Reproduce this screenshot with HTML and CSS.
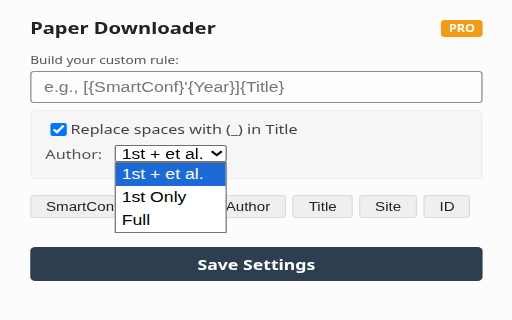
FILE: index.html
```html
<!DOCTYPE html>
<html lang="en">
<head>
  <meta charset="UTF-8" />
  <title>Paper Downloader</title>
  <meta name="viewport" content="width=device-width, initial-scale=1.0" />
  <link rel="stylesheet" href="styles.css">
</head>
<body>

<div class="popup">
  <div class="header">
    <h1>Paper Downloader</h1>
    <span class="badge">PRO</span>
  </div>

  <label class="rule-label" for="rule">Build your custom rule:</label>
  <input type="text" id="rule" class="rule-input" placeholder="e.g., [{SmartConf}'{Year}]{Title}" />

  <div class="options">
    <label class="opt-row">
      <input type="checkbox" checked />
      <span>Replace spaces with (_) in Title</span>
    </label>
    <div class="opt-row">
      <span class="author-label">Author:</span>
      <div class="select-wrap">
        <div class="select">
          <span>1st + et al.</span>
          <svg width="10" height="7" viewBox="0 0 10 7"><path d="M1 1.2 L5 5.2 L9 1.2" fill="none" stroke="#111" stroke-width="2"/></svg>
        </div>
        <ul class="dropdown">
          <li class="active">1st + et al.</li>
          <li>1st Only</li>
          <li>Full</li>
        </ul>
      </div>
    </div>
  </div>

  <div class="tokens">
    <button type="button">SmartConf</button>
    <button type="button">Year</button>
    <button type="button">Author</button>
    <button type="button">Title</button>
    <button type="button">Site</button>
    <button type="button">ID</button>
  </div>

  <button type="button" class="save">Save Settings</button>
</div>

</body>
</html>
```

FILE: styles.css
```css
html, body { margin: 0; background: #fcfcfc; overflow: hidden; }
body { font-family: "Noto Sans", Arial, sans-serif; color: #333; }

/* screenshot was stretched wide, so the popup is scaled the same way */
.popup {
  width: 406px;
  box-sizing: border-box;
  padding: 18px 23px 0 24px;
  transform: scaleX(1.26);
  transform-origin: 0 0;
}

.header { display: flex; justify-content: space-between; align-items: center; height: 20px; }
.header h1 { margin: 0; font-size: 16px; line-height: 20px; font-weight: bold; color: #222; }
.badge {
  background: #f39c12;
  color: #fff;
  font-size: 10px;
  font-weight: bold;
  line-height: 17px;
  padding: 0 6px;
  border-radius: 3px;
}

.rule-label { display: block; margin-top: 15px; font-size: 10.8px; line-height: 14px; color: #555; }
.rule-input {
  display: block;
  width: 100%;
  height: 32px;
  margin-top: 4px;
  padding: 0 10px;
  box-sizing: border-box;
  border: 1px solid #8d8d8d;
  border-radius: 3px;
  background: #fdfdfd;
  font-family: "Liberation Sans", Arial, sans-serif;
  font-size: 14px;
}
.rule-input::placeholder { color: #777; }

.options {
  margin-top: 7px;
  padding: 10px 11px 8px;
  background: #f6f6f6;
  border: 1px solid #eeeeee;
  border-radius: 4px;
}
.opt-row { display: flex; align-items: center; margin-bottom: 8px; height: 16px; font-size: 12.8px; color: #444; }
.opt-row:last-child { height: 17px; }
.opt-row input { margin: 0 3px 0 4px; width: 13px; height: 13px; }
.author-label { color: #555; margin-right: 9.5px; }

.select-wrap { position: relative; }
.select {
  display: flex;
  align-items: center;
  justify-content: space-between;
  width: 89px;
  height: 17px;
  box-sizing: border-box;
  padding: 0 2px 0 5px;
  border: 1px solid #6f6f6f;
  border-radius: 2px;
  background: #fff;
  font-family: "Liberation Sans", Arial, sans-serif;
  font-size: 14px;
  color: #000;
}
.dropdown {
  position: absolute;
  top: 100%;
  left: 0;
  width: 89px;
  box-sizing: border-box;
  margin: 0;
  padding: 0;
  list-style: none;
  background: #fff;
  border: 1px solid #767676;
  font-family: "Liberation Sans", Arial, sans-serif;
  font-size: 14px;
  color: #000;
  z-index: 2;
}
.dropdown li { height: 23px; line-height: 23px; padding-left: 5px; }
.dropdown li.active { background: #1c6ad8; color: #fff; }

.tokens { display: flex; gap: 5.5px; margin-top: 16px; }
.tokens button {
  height: 23px;
  padding: 0 11.5px;
  background: #efefef;
  border: 1px solid #dcdcdc;
  border-radius: 3px;
  font-family: "Liberation Sans", Arial, sans-serif;
  font-size: 12px;
  color: #222;
}

.save {
  display: block;
  width: 100%;
  height: 34px;
  margin-top: 29px;
  background: #2c3e50;
  color: #fff;
  border: none;
  border-radius: 4px;
  font-family: "Noto Sans", Arial, sans-serif;
  font-size: 14px;
  font-weight: bold;
}
```
